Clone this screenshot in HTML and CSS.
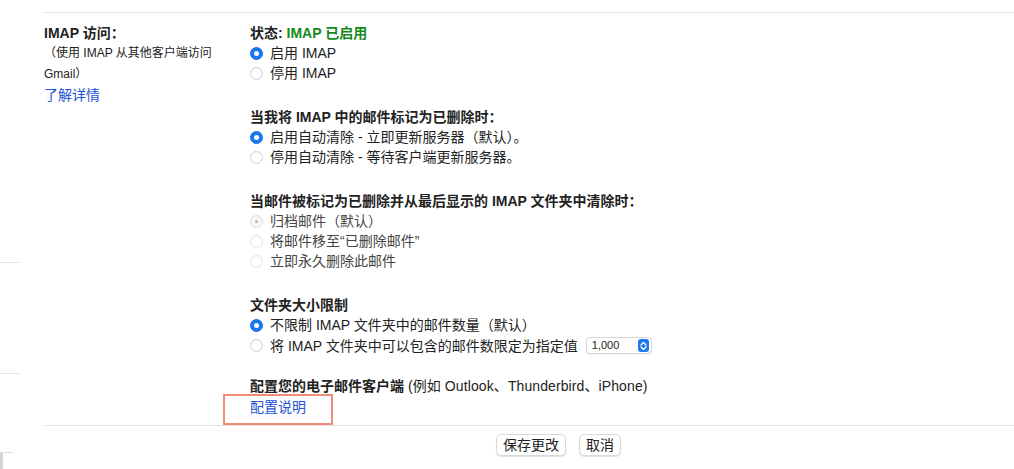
FILE: index.html
```html
<!DOCTYPE html>
<html lang="zh-CN">
<head>
<meta charset="utf-8">
<title>IMAP 访问</title>
<link rel="stylesheet" href="styles.css">
</head>
<body>
<div class="page">
  <div class="gutter">
    <div class="gline gline-1"></div>
    <div class="gline gline-2"></div>
    <div class="gblock"></div>
  </div>
  <div class="main">
    <div class="settings">
      <div class="label-col">
        <div class="label-title">IMAP 访问：</div>
        <div class="label-sub">（使用 IMAP 从其他客户端访问 Gmail）</div>
        <a class="link" href="#">了解详情</a>
      </div>
      <div class="opts-col">
        <div class="section">
          <div class="heading">状态: <span class="ok">IMAP 已启用</span></div>
          <div class="opt"><span class="radio on"></span>启用 IMAP</div>
          <div class="opt"><span class="radio"></span>停用 IMAP</div>
        </div>
        <div class="section">
          <div class="heading">当我将 IMAP 中的邮件标记为已删除时：</div>
          <div class="opt"><span class="radio on"></span>启用自动清除 - 立即更新服务器（默认）。</div>
          <div class="opt"><span class="radio"></span>停用自动清除 - 等待客户端更新服务器。</div>
        </div>
        <div class="section">
          <div class="heading">当邮件被标记为已删除并从最后显示的 IMAP 文件夹中清除时：</div>
          <div class="opt disabled"><span class="radio dis-on"></span>归档邮件（默认）</div>
          <div class="opt disabled"><span class="radio dis"></span>将邮件移至“已删除邮件”</div>
          <div class="opt disabled"><span class="radio dis"></span>立即永久删除此邮件</div>
        </div>
        <div class="section section-limit">
          <div class="heading">文件夹大小限制</div>
          <div class="opt"><span class="radio on"></span>不限制 IMAP 文件夹中的邮件数量（默认）</div>
          <div class="opt opt-select"><span class="radio"></span>将 IMAP 文件夹中可以包含的邮件数限定为指定值
            <span class="select"><span class="select-val">1,000</span><span class="stepper"><svg width="7" height="10" viewBox="0 0 7 10"><path d="M1 4 L3.5 1.5 L6 4 M1 6 L3.5 8.5 L6 6" fill="none" stroke="#fff" stroke-width="1.4" stroke-linecap="round" stroke-linejoin="round"/></svg></span></span>
          </div>
        </div>
        <div class="section section-last">
          <div class="heading">配置您的电子邮件客户端 <span class="normal">(例如 Outlook、Thunderbird、iPhone)</span></div>
          <div class="config"><a class="link" href="#">配置说明</a><span class="highlight"></span></div>
        </div>
      </div>
    </div>
    <div class="actions">
      <button class="btn">保存更改</button>
      <button class="btn">取消</button>
    </div>
  </div>
</div>
</body>
</html>
```

FILE: styles.css
```css
* { box-sizing: border-box; }
html, body { margin: 0; padding: 0; background: #fff; }
body {
  font-family: "Liberation Sans", "Noto Sans CJK SC", sans-serif;
  font-size: 14px;
  color: #222;
  width: 1014px;
  height: 469px;
  overflow: hidden;
}
.page { display: flex; height: 469px; }
.gutter { width: 44px; flex: none; display: flex; flex-direction: column; }
.gline { width: 20px; height: 1px; background: #e6e6e6; }
.gline-1 { margin-top: 262px; }
.gline-2 { margin-top: 110px; }
.gblock {
  margin-top: 79px;
  width: 13px;
  height: 17px;
  border-top: 1px solid #dcdcdc;
}
.gblock::after {
  content: "";
  display: block;
  width: 3px;
  height: 16px;
  background: #d4d4d4;
}
.main { flex: 1; display: flex; flex-direction: column; }
.settings {
  margin-top: 12px;
  border-top: 1px solid #e2e2e2;
  border-bottom: 1px solid #e2e2e2;
  display: flex;
  padding: 10px 0 8px 0;
}
.label-col { width: 206px; flex: none; display: flex; flex-direction: column; align-items: flex-start; }
.label-title { font-weight: bold; line-height: 20px; }
.label-sub { font-size: 12px; line-height: 21px; width: 186px; color: #222; }
.link { color: #2352d6; text-decoration: none; line-height: 20px; }
.opts-col { flex: 1; }
.section { margin-bottom: 24px; }
.section-limit { margin-bottom: 20px; }
.section-last { margin-bottom: 0; }
.heading { font-weight: bold; line-height: 20px; }
.heading .normal { font-weight: normal; letter-spacing: 0.1px; }
.ok { color: #138a1a; }
.opt { display: flex; align-items: center; line-height: 20px; height: 20px; }
.opt.disabled { color: #444; }
.opt-select { height: 21px; }
.radio {
  width: 13px; height: 13px; border-radius: 50%;
  border: 1px solid #cfcfcf; background: #fff;
  margin-right: 7px; flex: none; position: relative;
  box-shadow: inset 0 1px 1px rgba(0,0,0,0.04);
}
.radio.on { background: #1a78f2; border-color: #1a6fe6; }
.radio.on::after {
  content: ""; position: absolute; left: 3px; top: 3px;
  width: 5px; height: 5px; border-radius: 50%; background: #fff;
}
.radio.dis { border-color: #e3e3e3; }
.radio.dis-on { border-color: #dedede; background: #f7f7f7; }
.radio.dis-on::after {
  content: ""; position: absolute; left: 4px; top: 4px;
  width: 3px; height: 3px; border-radius: 50%; background: #b5b5b5;
}
.select {
  display: inline-flex; align-items: center; justify-content: space-between;
  margin-left: 8px; width: 66px; height: 17px;
  border: 1px solid #d6d6d6; border-radius: 4px;
  padding: 0 2px 0 5px; background: #fff;
  box-shadow: 0 1px 1px rgba(0,0,0,0.06);
}
.select-val { font-size: 11px; line-height: 15px; color: #222; }
.stepper {
  width: 11px; height: 13px; border-radius: 3px; background: #1a78f2;
  display: flex; align-items: center; justify-content: center;
}
.config { position: relative; display: flex; height: 20px; margin-top: 1px; }
.highlight {
  position: absolute; left: -27px; top: -3px;
  width: 110px; height: 31px;
  border: 2px solid #f28b78;
  pointer-events: none;
}
.actions { display: flex; gap: 13px; padding: 8px 0 0 452px; }
.btn {
  font-family: "Liberation Sans", "Noto Sans CJK SC", sans-serif;
  font-size: 14px; color: #222;
  height: 22px; line-height: 20px; padding: 0 6px;
  background: #fff; border: 1px solid #d9d9d9; border-radius: 5px;
  box-shadow: 0 1px 1px rgba(0,0,0,0.12);
}
```
